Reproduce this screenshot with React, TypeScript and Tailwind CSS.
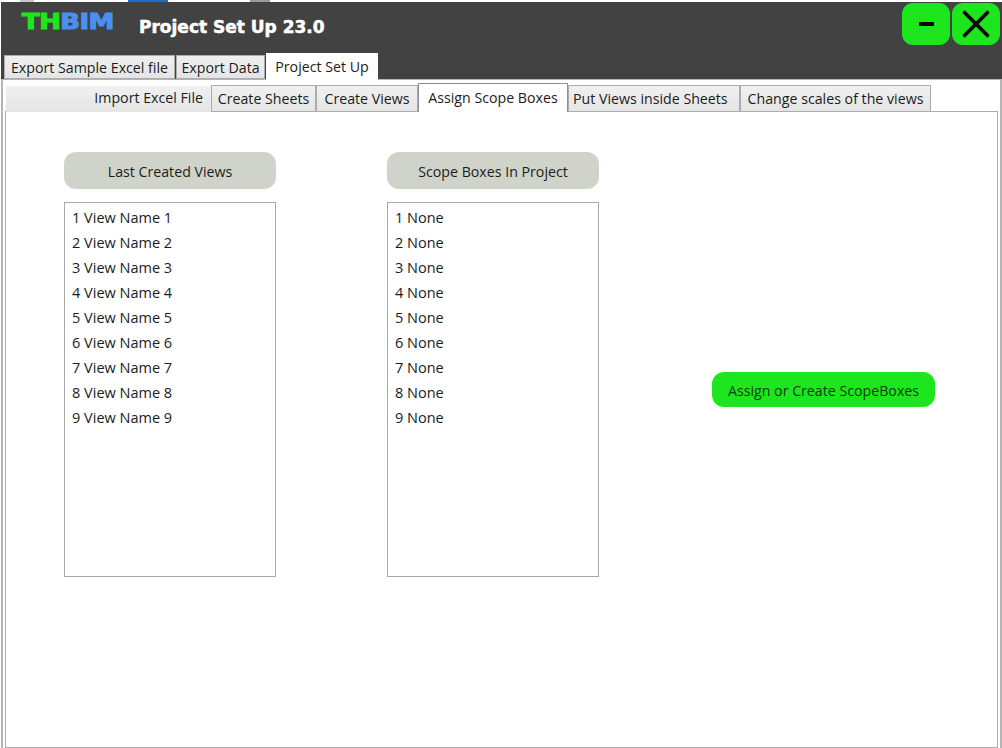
import { X } from 'lucide-react';

const font = { ui: "font-['Open_Sans',sans-serif]" };

const outerTabs = [
  { label: 'Export Sample Excel file', width: 'w-[171px]' },
  { label: 'Export Data', width: 'w-[89px]' },
];

const innerTabs = [
  { label: 'Create Sheets', width: 'w-[105px] justify-center', active: false },
  { label: 'Create Views', width: 'w-[102px] justify-center', active: false },
  { label: 'Assign Scope Boxes', width: 'w-[150px] justify-center', active: true },
  { label: 'Put Views inside Sheets', width: 'w-[172px] pl-[4px]', active: false },
  { label: 'Change scales of the views', width: 'w-[191px] justify-center', active: false },
];

function ListColumn({ title, items }: { title: string; items: string[] }) {
  return (
    <div className="flex w-[212px] flex-col">
      <div className="flex h-[37px] items-center justify-center rounded-[12px] bg-[#d0d3ca] pt-[2px] text-[14.2px] text-[#1c1c1c]">
        {title}
      </div>
      <div className="mt-[13px] flex h-[375px] flex-col border border-[#a9a9a9] pl-[7px] pt-[2px] text-[14.5px] text-[#1c1c1c]">
        {items.map((item, i) => (
          <div key={i} className="flex h-[25px] items-center whitespace-pre">{i + 1} {item}</div>
        ))}
      </div>
    </div>
  );
}

export default function App() {
  const nums = [1, 2, 3, 4, 5, 6, 7, 8, 9];

  return (
    <div className={`flex h-[748px] w-[1002px] flex-col overflow-hidden bg-white ${font.ui}`}>
      {/* bits of the desktop showing above the window */}
      <div className="flex h-[2px]">
        <span className="ml-[20px] w-[14px] bg-[#c8c8c8]" />
        <span className="ml-[94px] w-[40px] bg-[#1a6fd0]" />
        <span className="ml-[82px] w-[20px] bg-[#9a9a9a]" />
      </div>
      <div className="ml-px flex h-[77px] flex-col bg-[#424242]">
        <div className="flex h-[51px] items-start">
          <div className="ml-[21px] mt-[9px] flex h-[24px] w-[90px] origin-left scale-x-[1.24] items-center font-['DejaVu_Sans',sans-serif] text-[21px] font-bold tracking-[-0.5px] [-webkit-text-stroke:1px_currentColor]">
            <span className="text-[#1ee61e]">TH</span>
            <span className="text-[#4a90f0]">BIM</span>
          </div>
          <div className="ml-[27px] mt-[13px] font-['DejaVu_Sans',sans-serif] text-[17px] font-bold leading-[24px] text-white [-webkit-text-stroke:0.5px_white]">
            Project Set Up 23.0
          </div>
          <div className="ml-auto mr-[1px] mt-px flex gap-[2px] pr-px">
            <button className="flex h-[42px] w-[48px] items-center justify-center rounded-[11px] bg-[#1ee61e]">
              <span className="h-[4px] w-[15px] rounded-[1px] bg-black" />
            </button>
            <button className="flex h-[42px] w-[48px] items-center justify-center rounded-[11px] bg-[#1ee61e]">
              <X size={46} strokeWidth={1.9} className="text-black" />
            </button>
          </div>
        </div>
        <div className="flex h-[26px] items-end pl-[3px]">
          {outerTabs.map(t => (
            <div
              key={t.label}
              className={`mr-px flex h-[24px] items-center justify-center border border-[#acacac] bg-gradient-to-b from-[#f0f0f0] to-[#e5e5e5] pt-[2px] text-[14.2px] text-[#1c1c1c] ${t.width}`}
            >
              {t.label}
            </div>
          ))}
          <div className="z-10 -mb-px flex h-[27px] w-[112px] items-center justify-center bg-white text-[14.2px] text-[#1c1c1c]">
            Project Set Up
          </div>
        </div>
      </div>

      <div className="ml-px flex flex-1 flex-col border-l-2 border-r-2 border-t border-[#b4b4b4] px-[2px] pt-[5px]">
        <div className="z-10 -mb-px flex h-[27px] items-end">
          <div className="ml-[1px] flex h-[26px] w-[205px] items-center justify-end bg-gradient-to-b from-[#f0f0f0] to-[#e5e5e5] pb-[3px] pr-[8px] text-[14.2px] text-[#1c1c1c]">
            Import Excel File
          </div>
          {innerTabs.map(t => (
            <div
              key={t.label}
              className={
                t.active
                  ? `z-10 flex h-[29px] items-center border border-b-0 border-[#8e8e8e] bg-white text-[14.2px] text-[#1c1c1c] ${t.width}`
                  : `flex h-[27px] items-center border border-[#acacac] bg-gradient-to-b from-[#f0f0f0] to-[#e5e5e5] text-[14.2px] text-[#1c1c1c] ${t.width}`
              }
            >
              {t.label}
            </div>
          ))}
        </div>
        <div className="flex flex-1 items-start border border-[#acacac] pl-[58px] pt-[40px]">
          <ListColumn title="Last Created Views" items={nums.map(n => `View Name ${n}`)} />
          <div className="ml-[111px]">
            <ListColumn title="Scope Boxes In Project" items={nums.map(() => 'None')} />
          </div>
          <button className="ml-[113px] mt-[220px] flex h-[35px] w-[223px] items-center justify-center rounded-[12px] bg-[#1ee61e] pt-[2px] text-[14.2px] text-[#0d3d0d]">
            Assign or Create ScopeBoxes
          </button>
        </div>
      </div>
    </div>
  );
}
